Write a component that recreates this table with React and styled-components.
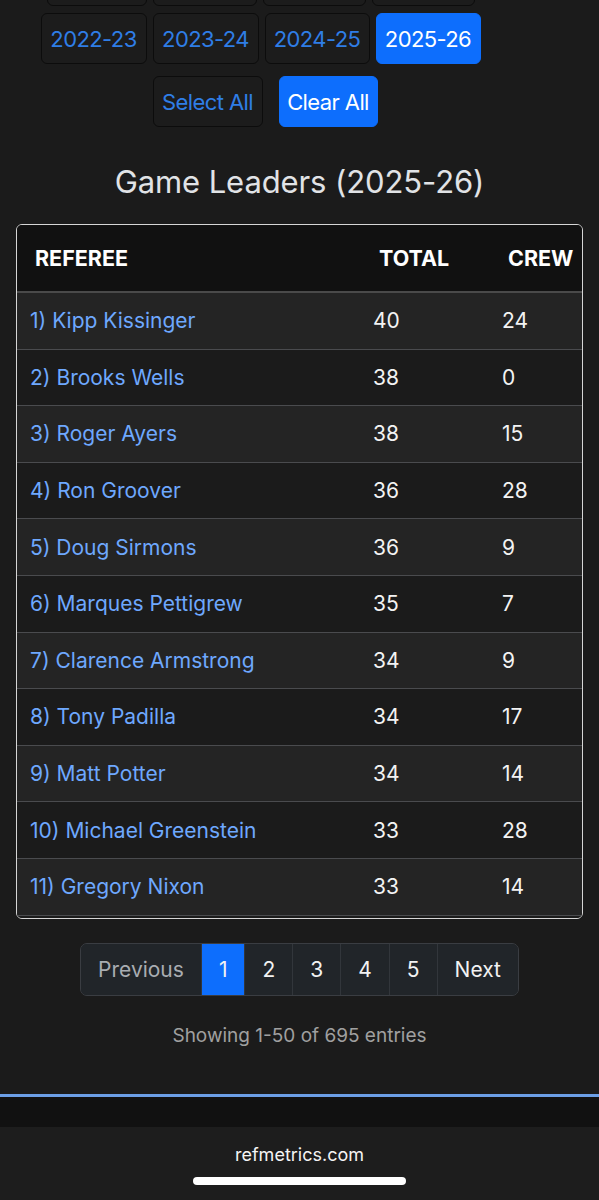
import React from "react";
import styled, { createGlobalStyle } from "styled-components";

const GlobalStyle = createGlobalStyle`
  body {
    margin: 0;
    background: #1b1b1b;
    font-family: Inter, "Open Sans", "Liberation Sans", sans-serif;
    color: #dee2e6;
  }
`;

const Screen = styled.div`
  height: 1200px;
  overflow: hidden;
  display: flex;
  flex-direction: column;
  background: #1b1b1b;
`;

const Main = styled.main`
  flex: 1;
  margin-top: -45px;
  padding: 0 16px;
`;

const Seasons = styled.div`
  display: flex;
  flex-direction: column;
  align-items: center;
  gap: 7px;
  padding-right: 78px;
`;

const ButtonRow = styled.div`
  display: flex;
  justify-content: center;
  gap: ${(p) => p.$gap || 6}px;
  margin-top: ${(p) => p.$top || 0}px;
  margin-left: ${(p) => p.$shift || 0}px;
`;

const Btn = styled.button`
  height: 51px;
  width: ${(p) => (p.$w ? `${p.$w}px` : "auto")};
  padding: 0 4px;
  white-space: nowrap;
  border-radius: 6px;
  border: 1px solid ${(p) => (p.$active ? "#0d6efd" : "#0c0c0c")};
  background: ${(p) => (p.$active ? "#0d6efd" : "#1c1c1c")};
  color: ${(p) => (p.$active ? "#ffffff" : "#2f7ee6")};
  font-family: inherit;
  font-size: 22px;
  letter-spacing: -0.6px;
`;

const Title = styled.h2`
  margin: 36px 0 24px;
  text-align: center;
  font-size: 31px;
  font-weight: 400;
  color: #e1e3e6;
  letter-spacing: -0.1px;
`;

const TableWrap = styled.div`
  height: 693px;
  overflow: hidden;
  border: 1px solid #d6d6d6;
  border-radius: 6px;
`;

const Table = styled.table`
  width: 700px;
  border-collapse: collapse;
  table-layout: fixed;
`;

const Th = styled.th`
  text-align: left;
  height: 66px;
  padding: 0 18px;
  background: #111111;
  color: #ffffff;
  font-size: 21.5px;
  font-weight: 700;
  border-bottom: 2px solid #4a4a4a;
`;

const Tr = styled.tr`
  background: ${(p) => (p.$odd ? "#242424" : "#1b1b1b")};
`;

const Td = styled.td`
  height: 55.6px;
  padding: 0 12px;
  border-bottom: 1px solid #4a4b4e;
  font-size: 21px;
  color: #f3f3f3;
`;

const NameLink = styled.a`
  color: #6ea8fe;
  text-decoration: none;
  margin-left: 1px;
`;

const Pager = styled.nav`
  display: flex;
  justify-content: center;
  margin-top: 24px;
`;

const PageList = styled.div`
  display: flex;
  border: 1px solid #3a3d42;
  border-radius: 7px;
  overflow: hidden;
  background: #212529;
`;

const PageItem = styled.span`
  height: 51px;
  display: flex;
  align-items: center;
  justify-content: center;
  padding: 0 ${(p) => p.$pad || 17}px;
  font-size: 21px;
  color: ${(p) => (p.$muted ? "#a9adb2" : "#f2f2f2")};
  background: ${(p) => (p.$active ? "#0d6efd" : "#212529")};
  & + & {
    border-left: 1px solid #32363b;
  }
`;

const Showing = styled.p`
  margin: 28px 0 0;
  text-align: center;
  color: #a0a0a0;
  font-size: 19px;
`;

const BlueRule = styled.div`
  height: 3px;
  background: #6c9fe6;
`;

const DarkBand = styled.div`
  height: 30px;
  background: #111111;
`;

const Footer = styled.footer`
  height: 73px;
  background: #1d1d1d;
  display: flex;
  flex-direction: column;
  align-items: center;
  padding-top: 17px;
  box-sizing: border-box;
  gap: 12px;
  font-size: 18px;
  color: #f4f4f4;
`;

const HomeBar = styled.div`
  width: 213px;
  height: 8px;
  border-radius: 4px;
  background: #ffffff;
`;

const rows = [
  ["Kipp Kissinger", 40, 24],
  ["Brooks Wells", 38, 0],
  ["Roger Ayers", 38, 15],
  ["Ron Groover", 36, 28],
  ["Doug Sirmons", 36, 9],
  ["Marques Pettigrew", 35, 7],
  ["Clarence Armstrong", 34, 9],
  ["Tony Padilla", 34, 17],
  ["Matt Potter", 34, 14],
  ["Michael Greenstein", 33, 28],
  ["Gregory Nixon", 33, 14],
  ["Scott Foster", 33, 12],
];

export default function App() {
  return (
    <>
      <GlobalStyle />
      <Screen>
        <Main>
          <Seasons>
            <ButtonRow>
              <Btn $w={100}>2018-19</Btn>
              <Btn $w={104}>2019-20</Btn>
              <Btn $w={103}>2020-21</Btn>
              <Btn $w={103}>2021-22</Btn>
            </ButtonRow>
            <ButtonRow>
              <Btn $w={106}>2022-23</Btn>
              <Btn $w={106}>2023-24</Btn>
              <Btn $w={105}>2024-25</Btn>
              <Btn $w={105} $active>2025-26</Btn>
            </ButtonRow>
            <ButtonRow $gap={16} $top={5} $shift={9}>
              <Btn $w={110}>Select All</Btn>
              <Btn $w={99} $active>Clear All</Btn>
            </ButtonRow>
          </Seasons>

          <Title>Game Leaders (2025-26)</Title>

          <TableWrap>
            <Table>
              <colgroup>
                <col style={{ width: 344 }} />
                <col style={{ width: 129 }} />
                <col style={{ width: 227 }} />
              </colgroup>
              <thead>
                <tr>
                  <Th>REFEREE</Th>
                  <Th>TOTAL</Th>
                  <Th>CREW</Th>
                </tr>
              </thead>
              <tbody>
                {rows.map(([name, total, crew], i) => (
                  <Tr key={name} $odd={i % 2 === 0}>
                    <Td>
                      <NameLink href="#">
                        {i + 1}) {name}
                      </NameLink>
                    </Td>
                    <Td>{total}</Td>
                    <Td>{crew}</Td>
                  </Tr>
                ))}
              </tbody>
            </Table>
          </TableWrap>

          <Pager>
            <PageList>
              <PageItem $muted $pad={17}>Previous</PageItem>
              <PageItem $active>1</PageItem>
              <PageItem>2</PageItem>
              <PageItem>3</PageItem>
              <PageItem>4</PageItem>
              <PageItem>5</PageItem>
              <PageItem>Next</PageItem>
            </PageList>
          </Pager>

          <Showing>Showing 1-50 of 695 entries</Showing>
        </Main>
        <BlueRule />
        <DarkBand />
        <Footer>
          <span>refmetrics.com</span>
          <HomeBar />
        </Footer>
      </Screen>
    </>
  );
}
